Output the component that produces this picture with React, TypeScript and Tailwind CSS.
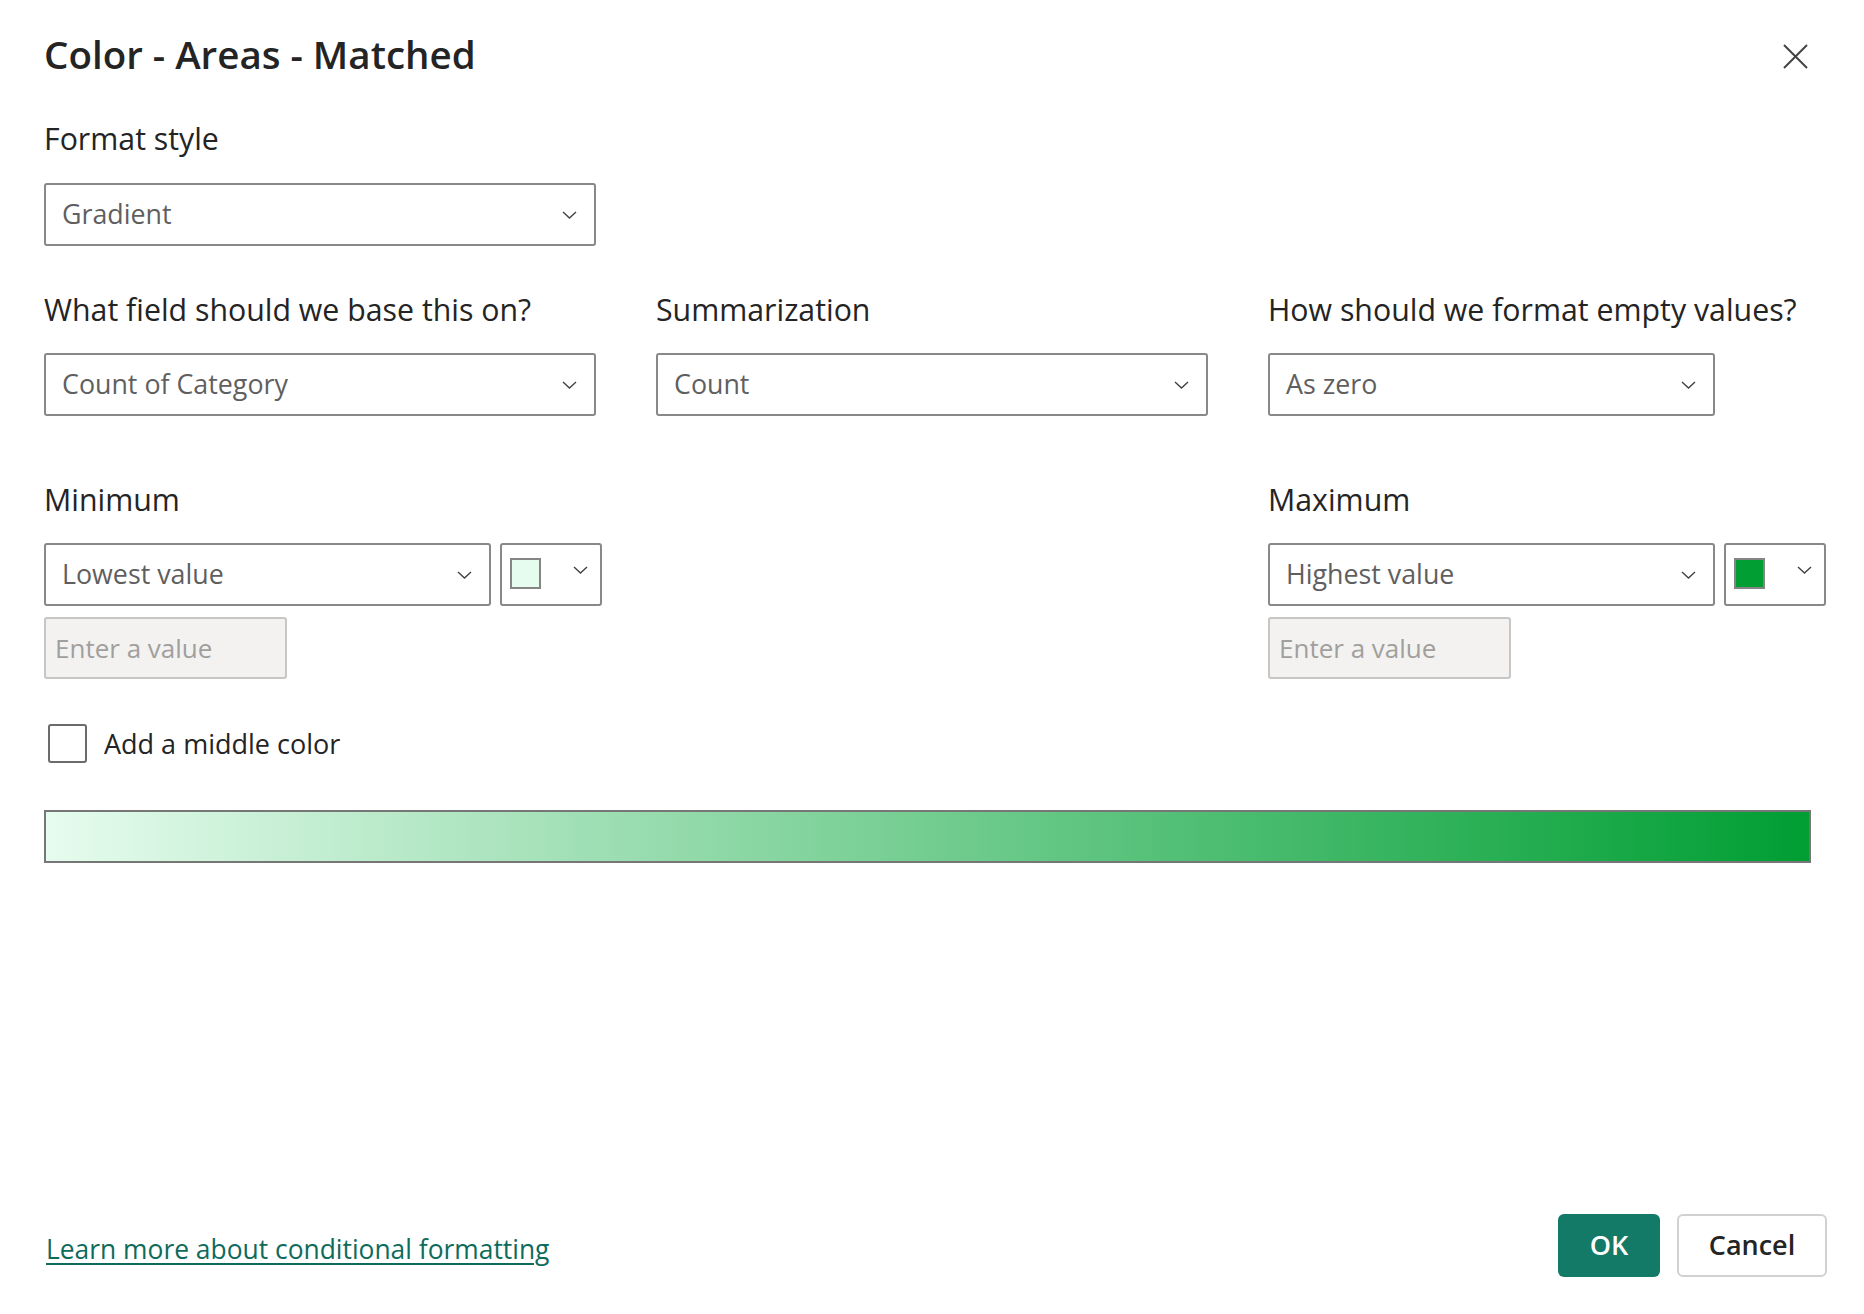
import { ReactNode } from "react"

const Chevron = ({ className = "" }: { className?: string }) => (
  <svg width="15" height="8" viewBox="0 0 15 8" fill="none" className={className}>
    <polyline points="1,1 7.5,7 14,1" stroke="#424242" strokeWidth="1.4" />
  </svg>
)

function Label({ children }: { children: ReactNode }) {
  return <div className="h-[36px] text-[30.3px] leading-[36px] whitespace-nowrap text-[#242424]">{children}</div>
}

function Dropdown({ value, width }: { value: string; width: string }) {
  return (
    <div
      className={`flex h-[63px] shrink-0 items-center justify-between rounded-[3px] border-2 border-[#8a8886] bg-white pl-[16px] pr-[17px] ${width}`}
    >
      <span className="text-[26.8px] text-[#5f5f5f]">{value}</span>
      <Chevron />
    </div>
  )
}

function ColorButton({ color }: { color: string }) {
  return (
    <div className="flex h-[63px] w-[102px] shrink-0 items-start rounded-[3px] border-2 border-[#8a8886] bg-white pl-[8px]">
      <div className="mt-[13px] h-[31px] w-[31px] border-2 border-[#858585]" style={{ backgroundColor: color }} />
      <Chevron className="ml-[32px] mt-[21px]" />
    </div>
  )
}

function ValueInput({ width }: { width: string }) {
  return (
    <div
      className={`mt-[11px] flex h-[62px] items-center rounded-[3px] border-2 border-[#c8c6c4] bg-[#f3f2f1] pl-[9px] ${width}`}
    >
      <span className="text-[26px] text-[#a19f9d]">Enter a value</span>
    </div>
  )
}

export default function App() {
  return (
    <div className="min-h-screen w-full bg-white font-['Open_Sans',sans-serif] text-[#242424]">
      <div className="pl-[44px] pr-[37px] pt-[30px]">
        {/* Header */}
        <div className="flex items-start justify-between">
          <h1 className="text-[38.5px] leading-[48px] font-semibold text-[#242424]">Color - Areas - Matched</h1>
          <button className="mr-[19px] mt-[14px] h-[25px] w-[25px]">
            <svg width="25" height="25" viewBox="0 0 25 25">
              <line x1="1" y1="1" x2="24" y2="24" stroke="#424242" strokeWidth="2" />
              <line x1="24" y1="1" x2="1" y2="24" stroke="#424242" strokeWidth="2" />
            </svg>
          </button>
        </div>

        {/* Format style */}
        <div className="mt-[43px]">
          <Label>Format style</Label>
          <div className="mt-[26px]">
            <Dropdown value="Gradient" width="w-[552px]" />
          </div>
        </div>

        {/* Field / Summarization / Empty values */}
        <div className="mt-[46px] grid grid-cols-[552px_552px_1fr] gap-x-[60px]">
          <div>
            <Label>What field should we base this on?</Label>
            <div className="mt-[25px]">
              <Dropdown value="Count of Category" width="w-[552px]" />
            </div>
          </div>
          <div>
            <Label>Summarization</Label>
            <div className="mt-[25px]">
              <Dropdown value="Count" width="w-[552px]" />
            </div>
          </div>
          <div>
            <Label>How should we format empty values?</Label>
            <div className="mt-[25px]">
              <Dropdown value="As zero" width="w-[447px]" />
            </div>
          </div>
        </div>

        {/* Minimum / Maximum */}
        <div className="mt-[66px] grid grid-cols-[552px_552px_1fr] gap-x-[60px]">
          <div>
            <Label>Minimum</Label>
            <div className="mt-[25px] flex gap-[9px]">
              <Dropdown value="Lowest value" width="w-[447px]" />
              <ColorButton color="#e6fcee" />
            </div>
            <ValueInput width="w-[243px]" />
          </div>
          <div />
          <div>
            <Label>Maximum</Label>
            <div className="mt-[25px] flex gap-[9px]">
              <Dropdown value="Highest value" width="w-[447px]" />
              <ColorButton color="#009e33" />
            </div>
            <ValueInput width="w-[243px]" />
          </div>
        </div>

        {/* Middle color */}
        <div className="mt-[45px] flex items-center pl-[4px]">
          <div className="h-[39px] w-[39px] rounded-[3px] border-2 border-[#6b6b6b] bg-white" />
          <span className="ml-[17px] text-[27px] leading-[36px] text-[#242424]">Add a middle color</span>
        </div>

        {/* Gradient preview */}
        <div className="mt-[47px] mr-[16px] h-[53px] border-2 border-[#767676] bg-[linear-gradient(to_right,#e6fcee,#009e33)]" />

        {/* Footer */}
        <div className="mt-[351px] flex items-start justify-between">
          <a href="#" className="ml-[2px] mt-[17px] text-[26.4px] leading-[36px] text-[#0e6b5b] underline underline-offset-[4px]">
            Learn more about conditional formatting
          </a>
          <div className="flex gap-[17px]">
            <button className="h-[63px] w-[102px] rounded-[6px] bg-[#147a68] text-[27px] font-semibold text-white">OK</button>
            <button className="h-[63px] w-[150px] rounded-[6px] border-2 border-[#d1d1d1] bg-white text-[27px] font-semibold text-[#242424]">
              Cancel
            </button>
          </div>
        </div>
      </div>
    </div>
  )
}
